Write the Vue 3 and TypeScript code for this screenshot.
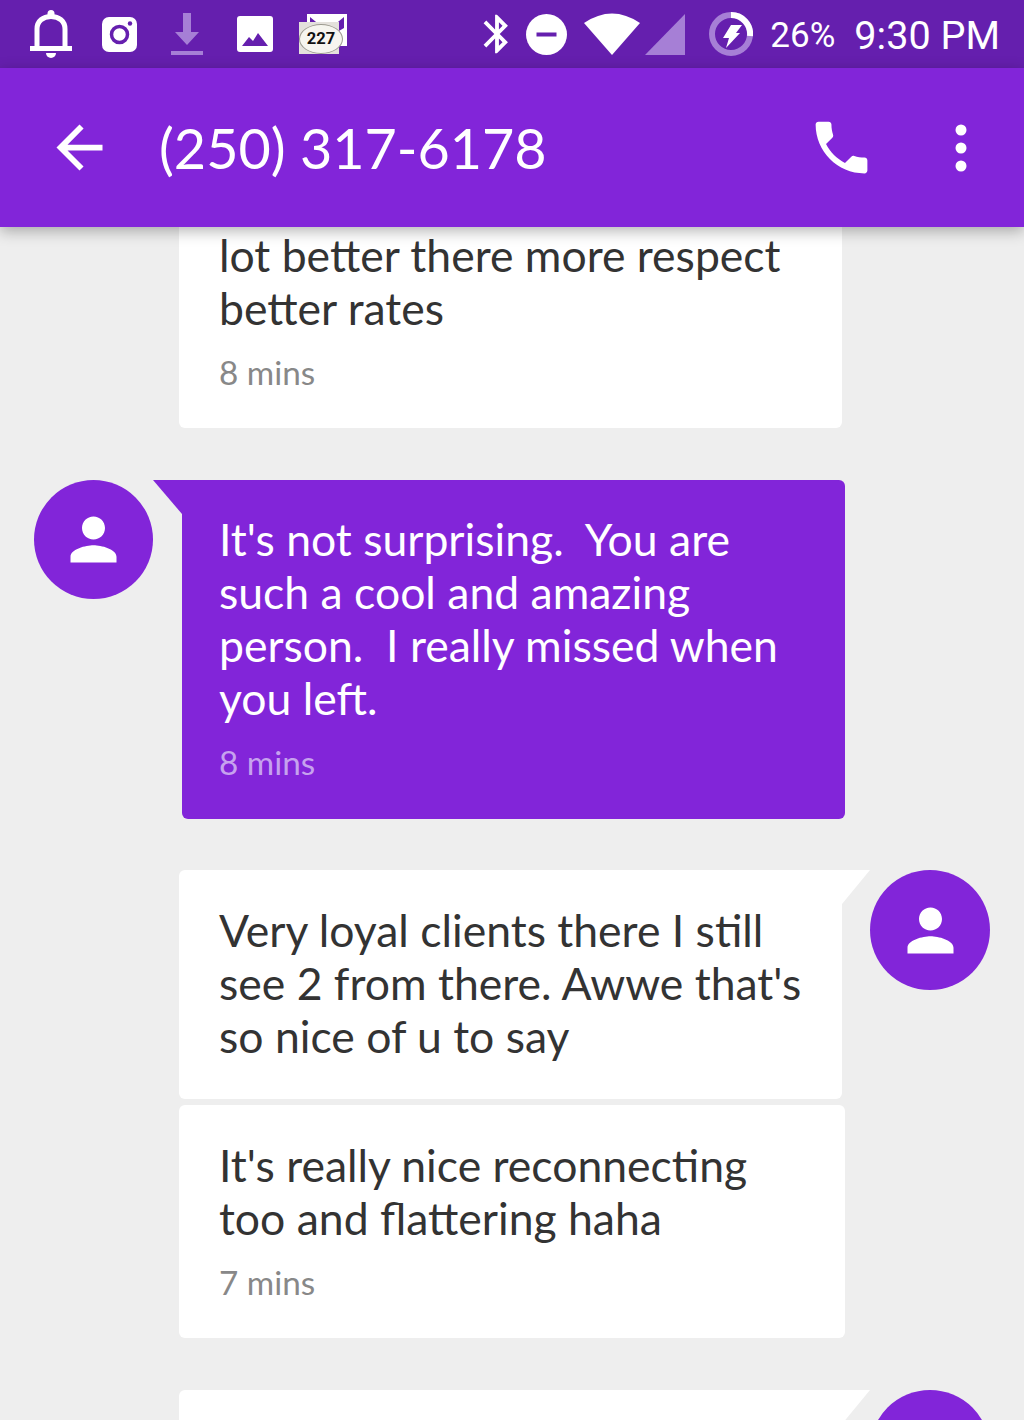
<template>
  <div class="page">
    <!-- status bar -->
    <div class="status-bar">
      <div class="status-left">
        <span class="slot">
          <svg width="42" height="48" viewBox="0 0 42 48">
            <path d="M7 36V19C7 11 13 6.500 21 6.500S35 11 35 19V36" fill="none" stroke="#fff" stroke-width="5" />
            <rect x="0" y="36" width="42" height="5" fill="#fff" />
            <circle cx="21" cy="3.500" r="3.500" fill="#fff" />
            <path d="M16 43H26A5 5 0 0 1 16 43Z" fill="#fff" />
          </svg>
        </span>
        <span class="slot">
          <svg width="35" height="35" viewBox="0 0 35 35">
            <rect width="35" height="35" rx="7" fill="#fff" />
            <circle cx="17.500" cy="17.500" r="8" fill="none" stroke="#651fae" stroke-width="3.500" />
            <circle cx="28" cy="6.500" r="2.200" fill="#651fae" />
          </svg>
        </span>
        <span class="slot">
          <svg width="32" height="42" viewBox="0 0 32 42">
            <path d="M12 0H20V19H28L16 32L4 19H12Z" fill="#a67fd6" />
            <rect y="38" width="32" height="4" fill="#a67fd6" />
          </svg>
        </span>
        <span class="slot">
          <svg width="36" height="36" viewBox="0 0 36 36">
            <rect width="36" height="36" rx="3" fill="#fff" />
            <path d="M5 30L12 21L16 25L21 17L31 30Z" fill="#651fae" />
          </svg>
        </span>
        <span class="slot">
          <span class="mail">
            <svg width="48" height="40" viewBox="0 0 48 40">
              <rect x="8" y="0" width="40" height="32" fill="#fff" />
              <path d="M11 3L28 17L45 3V14L28 24L11 14Z" fill="#651fae" />
              <rect x="0" y="8" width="40" height="32" fill="#e4e1dc" />
            </svg>
            <b class="mail-count">227</b>
          </span>
        </span>
      </div>
      <div class="status-right">
        <svg class="ic-bt" width="46" height="46" viewBox="0 0 24 24">
          <path fill="#fff" d="M17.710 7.710L12 2h-1v7.590L6.410 5 5 6.410 10.590 12 5 17.590 6.410 19 11 14.410V22h1l5.710-5.710-4.300-4.290 4.300-4.290zM13 5.830l1.880 1.880L13 9.590V5.830zm1.880 10.460L13 18.170v-3.760l1.880 1.880z" />
        </svg>
        <svg class="ic-dnd" width="41" height="41" viewBox="0 0 41 41">
          <circle cx="20.500" cy="20.500" r="20.500" fill="#fff" />
          <rect x="10.500" y="18.500" width="20" height="4" fill="#651fae" />
        </svg>
        <svg class="ic-wifi" width="56" height="42" viewBox="0 0 56 42">
          <path d="M0 10Q28 -9 56 10L28 42Z" fill="#fff" />
        </svg>
        <svg class="ic-signal" width="40" height="41" viewBox="0 0 40 41">
          <path d="M0 41L40 0V41Z" fill="#a67fd6" />
        </svg>
        <svg class="ic-batt" width="44" height="44" viewBox="0 0 44 44">
          <circle cx="22" cy="22" r="19" fill="none" stroke="#a67fd6" stroke-width="6" />
          <path d="M22 3A19 19 0 0 1 41 24" fill="none" stroke="#fff" stroke-width="6" />
          <path d="M22 13H33L27 21H31L17 36L20 26H14Z" fill="#fff" />
        </svg>
        <span class="batt-text">26%</span>
        <span class="clock">9:30 PM</span>
      </div>
    </div>

    <!-- toolbar -->
    <header class="toolbar">
      <svg class="ic-back" width="69" height="69" viewBox="0 0 24 24">
        <path fill="#fff" d="M20 11H7.830l5.590-5.590L12 4l-8 8 8 8 1.410-1.410L7.830 13H20v-2z" />
      </svg>
      <h1 class="title">(250) 317-6178</h1>
      <svg class="ic-call" width="69" height="69" viewBox="0 0 24 24">
        <path fill="#fff" d="M6.620 10.790c1.440 2.830 3.760 5.140 6.590 6.590l2.200-2.200c.27-.27.67-.36 1.020-.24 1.120.37 2.330.57 3.570.57.55 0 1 .45 1 1V20c0 .55-.45 1-1 1-9.390 0-17-7.610-17-17 0-.55.45-1 1-1h3.500c.55 0 1 .45 1 1 0 1.250.2 2.450.57 3.570.11.35.03.74-.25 1.020l-2.200 2.200z" />
      </svg>
      <svg class="ic-more" width="12" height="48" viewBox="0 0 12 48">
        <circle cx="6" cy="6" r="5.500" fill="#fff" />
        <circle cx="6" cy="24" r="5.500" fill="#fff" />
        <circle cx="6" cy="42" r="5.500" fill="#fff" />
      </svg>
    </header>

    <!-- messages -->
    <main class="thread">
      <div
        v-for="msg in messages"
        :key="msg.id"
        :class="['row', msg.incoming ? 'row-in' : 'row-out', { 'row-grouped': msg.grouped }]"
      >
        <div v-if="msg.incoming" class="avatar">
          <svg width="69" height="69" viewBox="0 0 24 24">
            <path fill="#fff" :d="personPath" />
          </svg>
        </div>
        <div v-if="msg.incoming" class="tail tail-in"></div>
        <div :class="['bubble', msg.cls]">
          <p v-if="msg.text" class="text">{{ msg.text }}</p>
          <div v-if="msg.time" class="time">{{ msg.time }}</div>
        </div>
        <div v-if="msg.tail && !msg.incoming" class="tail tail-out"></div>
        <div v-if="msg.tail && !msg.incoming" class="avatar">
          <svg width="69" height="69" viewBox="0 0 24 24">
            <path fill="#fff" :d="personPath" />
          </svg>
        </div>
      </div>
    </main>
  </div>
</template>

<script setup lang="ts">
interface Message {
  id: number
  text: string
  time?: string
  incoming?: boolean
  grouped?: boolean
  tail?: boolean
  cls?: string
}

const personPath =
  'M12 12c2.210 0 4-1.790 4-4s-1.790-4-4-4-4 1.790-4 4 1.790 4 4 4zm0 2c-2.670 0-8 1.340-8 4v2h16v-2c0-2.660-5.330-4-8-4z'

const messages: Message[] = [
  { id: 1, text: 'lot better there more respect better rates', time: '8 mins', cls: 'bubble-cut' },
  {
    id: 2,
    text: "It's not surprising.  You are such a cool and amazing person.  I really missed when you left.",
    time: '8 mins',
    incoming: true
  },
  {
    id: 3,
    text: "Very loyal clients there I still see 2 from there. Awwe that's so nice of u to say",
    tail: true
  },
  {
    id: 4,
    text: "It's really nice reconnecting too and flattering haha",
    time: '7 mins',
    grouped: true,
    cls: 'bubble-wide'
  },
  { id: 5, text: '', tail: true, cls: 'bubble-next' }
]
</script>

<style>
html,
body {
  margin: 0;
  background: #eeeeee;
}
</style>

<style scoped>
.page {
  display: flex;
  flex-direction: column;
  width: 1024px;
  height: 1420px;
  overflow: hidden;
  background: #eeeeee;
  font-family: Lato, "Liberation Sans", sans-serif;
}

.status-bar {
  display: flex;
  flex: none;
  align-items: center;
  justify-content: space-between;
  height: 68px;
  background: #651fae;
  color: #fff;
  font-family: Roboto, "Liberation Sans", sans-serif;
}

.status-left {
  display: flex;
  align-items: center;
  padding-left: 17px;
}

.slot {
  display: flex;
  align-items: center;
  justify-content: center;
  width: 68px;
}

.slot svg {
  display: block;
}

.mail {
  position: relative;
  display: block;
  width: 48px;
  height: 40px;
}

.mail-count {
  position: absolute;
  left: 0;
  top: 10px;
  width: 44px;
  height: 30px;
  box-sizing: border-box;
  border: 1px solid #9c9a90;
  border-radius: 50%;
  background: #f6f5ef;
  color: #111;
  font-size: 16.500px;
  line-height: 28px;
  text-align: center;
}

.status-right {
  display: flex;
  align-items: center;
  padding-right: 24px;
}

.status-right svg {
  display: block;
}

.ic-dnd {
  margin-left: 6px;
}

.ic-wifi {
  margin-left: 17px;
}

.ic-signal {
  margin-left: 5px;
}

.ic-batt {
  margin-left: 24px;
}

.batt-text {
  margin-left: 17px;
  padding-top: 2px;
  font-size: 35px;
}

.clock {
  margin-left: 19px;
  padding-top: 2px;
  font-size: 39.600px;
}

.toolbar {
  position: relative;
  z-index: 2;
  display: flex;
  flex: none;
  align-items: center;
  height: 159px;
  padding-left: 45px;
  background: #8225d9;
  box-shadow: 0 4px 14px rgba(0, 0, 0, 0.3);
  color: #fff;
}

.title {
  flex: 1;
  margin: 0 0 0 45px;
  font-size: 55.700px;
  font-weight: 400;
}

.ic-more {
  margin: 0 57px 0 79px;
}

.thread {
  flex: 1;
  min-height: 0;
  overflow: hidden;
}

.row {
  display: flex;
  align-items: flex-start;
  margin-top: 52px;
}

.row:first-child {
  margin-top: 0;
}

.row-in {
  padding-left: 34px;
}

.row-in + .row {
  margin-top: 51px;
}

.row-out {
  padding-left: 179px;
}

.row-grouped {
  margin-top: 6px;
}

.avatar {
  display: flex;
  flex: none;
  align-items: center;
  justify-content: center;
  width: 120px;
  height: 120px;
  border-radius: 50%;
  background: #8225d9;
}

.row-in .avatar {
  width: 119px;
  height: 119px;
}

.tail {
  flex: none;
  width: 29px;
  height: 34px;
}

.tail-in {
  background: #8225d9;
  clip-path: polygon(0 0, 100% 0, 100% 100%);
}

.tail-out {
  width: 28px;
  background: #fff;
  clip-path: polygon(0 0, 100% 0, 0 100%);
}

.bubble {
  box-sizing: border-box;
  width: 663px;
  padding: 33px 30px 37px 40px;
  border-radius: 6px;
  background: #fff;
  color: #333;
}

.row-in .bubble {
  padding-top: 32px;
  padding-left: 37px;
  background: #8225d9;
  color: #fff;
  border-top-left-radius: 0;
}

.row-out:has(.tail-out) .bubble {
  border-top-right-radius: 0;
}

.bubble-cut {
  padding-top: 1px;
  border-radius: 0 0 6px 6px;
}

.bubble-wide {
  width: 666px;
}

.bubble-next {
  height: 120px;
}

.text {
  margin: 0;
  font-size: 44.500px;
  line-height: 53px;
  white-space: pre-wrap;
}

.time {
  margin: 19px 0 -1px;
  color: #888888;
  font-size: 33.300px;
  line-height: 39px;
}

.row-in .time {
  margin-bottom: 0;
  color: #c6a2ee;
}
</style>
